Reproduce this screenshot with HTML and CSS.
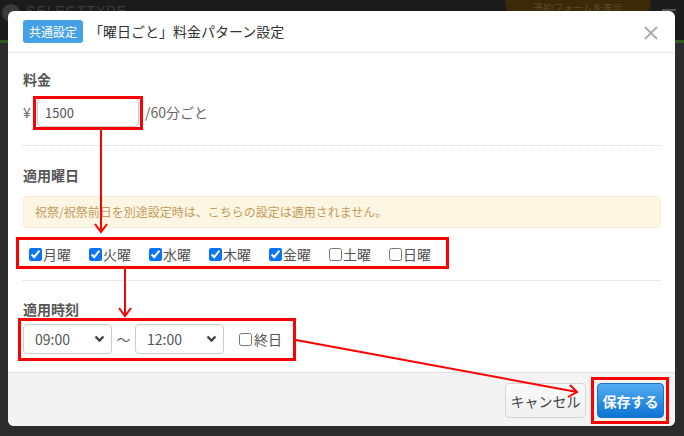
FILE: index.html
```html
<!DOCTYPE html>
<html lang="ja">
<head>
<meta charset="utf-8">
<link rel="stylesheet" href="styles.css">
</head>
<body>
<div class="page">
  <div class="topbar">
    <span class="logo-mark"></span>
    <span class="logo">SELECTTYPE</span>
    <span class="pill">予約フォームを表示</span>
    <span class="burger"></span>
  </div>
  <div class="greenline"></div>
</div>

<div class="modal">
  <div class="modal-header">
    <span class="badge">共通設定</span>
    <h1 class="title">「曜日ごと」料金パターン設定</h1>
    <span class="close">
      <svg width="14" height="14" viewBox="0 0 14 14"><path d="M1 1L13 13M13 1L1 13" stroke="#adadad" stroke-width="2" fill="none"/></svg>
    </span>
  </div>
  <div class="modal-body">
    <section class="group first">
      <h2 class="label">料金</h2>
      <div class="price-row">
        <span class="yen">¥</span>
        <input class="text-input" type="text" value="1500">
        <span class="unit">/60分ごと</span>
      </div>
    </section>
    <section class="group middle">
      <h2 class="label">適用曜日</h2>
      <div class="alert">祝祭/祝祭前日を別途設定時は、こちらの設定は適用されません。</div>
      <div class="days">
        <label class="check"><input type="checkbox" checked>月曜</label>
        <label class="check"><input type="checkbox" checked>火曜</label>
        <label class="check"><input type="checkbox" checked>水曜</label>
        <label class="check"><input type="checkbox" checked>木曜</label>
        <label class="check"><input type="checkbox" checked>金曜</label>
        <label class="check"><input type="checkbox">土曜</label>
        <label class="check"><input type="checkbox">日曜</label>
      </div>
    </section>
    <section class="group last">
      <h2 class="label">適用時刻</h2>
      <div class="time-row">
        <div class="select"><span>09:00</span><svg width="11" height="8" viewBox="0 0 11 8"><path d="M1.5 1.5L5.5 5.5L9.5 1.5" stroke="#444" stroke-width="2.4" fill="none"/></svg></div>
        <span class="tilde">～</span>
        <div class="select"><span>12:00</span><svg width="11" height="8" viewBox="0 0 11 8"><path d="M1.5 1.5L5.5 5.5L9.5 1.5" stroke="#444" stroke-width="2.4" fill="none"/></svg></div>
        <label class="check allday"><input type="checkbox">終日</label>
      </div>
    </section>
  </div>
  <div class="modal-footer">
    <button class="btn btn-default">キャンセル</button>
    <button class="btn btn-primary">保存する</button>
  </div>
</div>

<svg class="annot" width="684" height="436" viewBox="0 0 684 436">
  <g fill="none" stroke="#ff0000" stroke-width="3">
    <rect x="34.5" y="97.5" width="107" height="31"/>
    <rect x="17.5" y="238.5" width="430" height="29"/>
    <rect x="19.5" y="319.5" width="275" height="40"/>
    <rect x="592.5" y="378.5" width="75" height="44"/>
  </g>
  <g fill="none" stroke="#ff0000" stroke-width="2">
    <path d="M101 130V232M95 224L101 232L107 224"/>
    <path d="M125 268V316M119 308L125 316L131 308"/>
    <path d="M296 340L577 392M570 385L577 392L568 397"/>
  </g>
</svg>
</body>
</html>
```

FILE: styles.css
```css
* { box-sizing: border-box; }
html, body { margin: 0; padding: 0; }
body {
  width: 684px;
  height: 436px;
  overflow: hidden;
  background: #2c2c2c;
  font-family: "Noto Sans CJK JP", "Noto Sans", sans-serif;
  color: #555;
  position: relative;
  line-height: 1.3;
}
.page { height: 436px; }
.topbar {
  height: 40px;
  background: #1b1b1b;
  display: flex;
  align-items: flex-start;
  position: relative;
}
.logo-mark {
  width: 18px; height: 18px; border-radius: 50%;
  background: #3a3a3a; margin: 4px 0 0 2px;
}
.logo {
  color: #3c3c3c; font-family: "Liberation Sans", sans-serif;
  font-size: 14px; letter-spacing: 1px; margin: 2px 0 0 6px;
}
.pill {
  position: absolute; left: 505px; top: -10px;
  width: 146px; height: 25px; border-radius: 12px;
  background: #3b2a08; color: #5a4a2a; font-size: 10px; line-height: 12px;
  display: flex; align-items: flex-end; justify-content: center; padding-bottom: 1px;
}
.burger {
  position: absolute; left: 662px; top: 9px; width: 14px; height: 2px; background: #555;
}
.greenline { height: 3px; background: #2f5a1e; }

.modal {
  position: absolute;
  left: 8px; top: 11px;
  width: 667px; height: 415px;
  background: #fff;
  border-radius: 6px;
  overflow: hidden;
  display: flex;
  flex-direction: column;
}
.modal-header {
  height: 42px;
  border-bottom: 1px solid #e5e5e5;
  display: flex;
  align-items: center;
  padding: 0 15px;
}
.badge {
  background: #45a0e6;
  color: #fff;
  font-size: 12px;
  line-height: 23px;
  height: 23px;
  padding: 0 6px;
  border-radius: 3px;
}
.title {
  margin: 0 0 0 6px;
  font-size: 14px;
  font-weight: normal;
  color: #333;
  flex: 1;
}
.close { display: flex; margin-right: 2px; margin-top: 2px; }

.modal-body {
  flex: 1;
  padding: 0 14px 0 15px;
}
.group {
  border-bottom: 1px dotted #d6d6d6;
}
.group.first { padding: 17px 0 18px; }
.group.middle { padding: 20px 0 16px; }
.group.last { border-bottom: none; padding: 19px 0 0; }
.label {
  margin: 0;
  font-size: 14px;
  font-weight: bold;
  color: #555;
  line-height: 18px;
}
.price-row {
  display: flex;
  align-items: center;
  margin-top: 10px;
  font-size: 14px;
  height: 29px;
}
.yen { width: 14px; color: #666; }
.text-input {
  width: 102px; height: 29px;
  border: 1px solid #ccc;
  border-radius: 4px;
  padding: 0 7px;
  font-family: "Noto Sans CJK JP", sans-serif;
  font-size: 13px;
  color: #555;
  margin-right: 6px;
}
.unit { color: #666; }
.alert {
  margin-top: 12px;
  height: 32px;
  background: #fdf6e2;
  border: 1px solid #faebcc;
  border-radius: 4px;
  color: #c49a5a;
  font-size: 12px;
  line-height: 30px;
  padding-left: 11px;
}
.days {
  display: flex;
  margin-top: 16px;
  padding-left: 6px;
  height: 20px;
}
.check {
  display: flex;
  align-items: center;
  font-size: 14px;
  color: #555;
  margin-right: 18px;
  line-height: 20px;
}
.check input {
  width: 13px; height: 13px;
  margin: 0 1px 0 0;
  accent-color: #0a74f5;
}
.time-row {
  display: flex;
  align-items: center;
  margin-top: 6px;
}
.select {
  width: 89px; height: 30px;
  border: 1px solid #ccc;
  border-radius: 4px;
  display: flex;
  align-items: center;
  justify-content: space-between;
  padding: 0 6px 0 11px;
  font-size: 14px;
  color: #555;
}
.tilde { width: 23px; text-align: center; font-size: 14px; color: #666; }
.allday { margin-left: 15px; }
.allday input { margin-right: 2px; }

.modal-footer {
  height: 54px;
  background: #f3f3f3;
  border-top: 1px solid #e2e2e2;
  display: flex;
  justify-content: flex-end;
  align-items: flex-start;
  padding: 10px 11px 0 0;
  gap: 11px;
}
.btn {
  height: 35px;
  border-radius: 4px;
  font-family: "Noto Sans CJK JP", sans-serif;
  font-size: 14px;
  padding: 0;
}
.btn-default {
  width: 81px;
  background: linear-gradient(#fafafa, #f0f0f0);
  border: 1px solid #d6d6d6;
  color: #444;
}
.btn-primary {
  width: 67px;
  background: linear-gradient(#53acf2, #0d74d3);
  border: 1px solid #1a74c4;
  color: #fff;
  font-weight: bold;
}
.annot { position: absolute; left: 0; top: 0; pointer-events: none; }
```
